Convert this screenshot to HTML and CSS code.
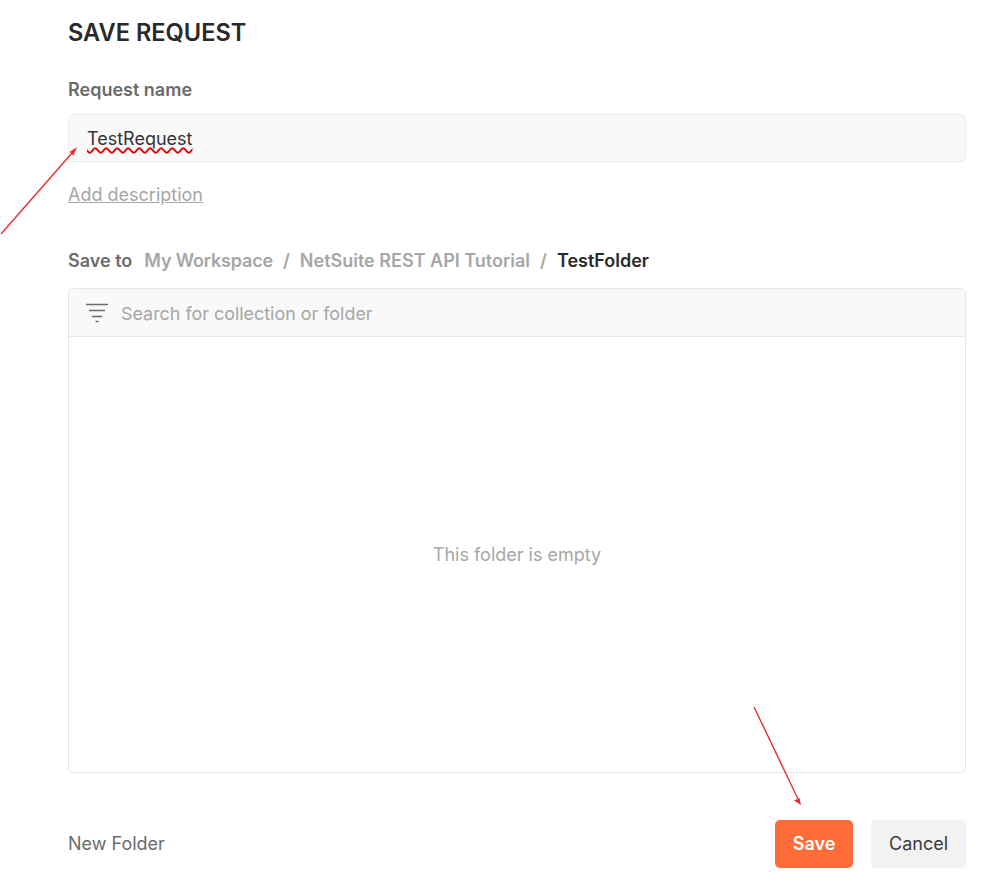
FILE: index.html
```html
<!DOCTYPE html>
<html lang="en">
<head>
<meta charset="utf-8">
<title>Save Request</title>
<link rel="stylesheet" href="styles.css">
</head>
<body>
<main class="dialog">
  <h1 class="title">SAVE REQUEST</h1>
  <label class="label">Request name</label>
  <div class="name-input"><span class="misspelt">TestRequest</span></div>
  <a class="add-desc">Add description</a>
  <div class="crumbs">
    <span class="crumb-label">Save to</span>
    <span class="crumb crumb-root">My Workspace</span>
    <span class="crumb">/</span>
    <span class="crumb">NetSuite REST API Tutorial</span>
    <span class="crumb">/</span>
    <span class="crumb-current">TestFolder</span>
  </div>
  <section class="browser">
    <div class="search">
      <svg class="filter" width="22" height="20" viewBox="0 0 22 20" aria-hidden="true">
        <path d="M0 1.500H22M3 7.500H19M6 13.500H16M9.500 18.500H12.500" fill="none" stroke="#6b6b6b" stroke-width="1.500"/>
      </svg>
      <span class="placeholder">Search for collection or folder</span>
    </div>
    <div class="empty">This folder is empty</div>
  </section>
  <footer class="actions">
    <span class="new-folder">New Folder</span>
    <div class="buttons">
      <button class="btn btn-save">Save</button>
      <button class="btn btn-cancel">Cancel</button>
    </div>
  </footer>
</main>
<svg class="annotations" width="993" height="892" viewBox="0 0 993 892" aria-hidden="true">
  <path d="M1 234L72 153" stroke="#e8302f" stroke-width="1.400" fill="none"/>
  <path d="M77 147L69.500 152L73.500 155.500Z" fill="#e8302f"/>
  <path d="M754 707L798 799" stroke="#e8302f" stroke-width="1.400" fill="none"/>
  <path d="M801 805L794 800.500L799.500 798Z" fill="#e8302f"/>
</svg>
</body>
</html>
```
FILE: styles.css
```css
* { box-sizing: border-box; }
html, body { margin: 0; background: #fff; }
body {
  width: 993px;
  height: 892px;
  overflow: hidden;
  position: relative;
  font-family: Inter, "Liberation Sans", sans-serif;
  font-size: 18px;
}
.dialog {
  width: 966px;
  padding: 17px 0 0 68px;
  display: flex;
  flex-direction: column;
}
.title {
  margin: 0;
  font-size: 23.600px;
  line-height: 32px;
  font-weight: 600;
  color: #2a2a2a;
}
.label {
  margin-top: 26px;
  font-size: 18px;
  line-height: 30px;
  font-weight: 600;
  color: #6b6b6b;
}
.name-input {
  margin-top: 9px;
  height: 48px;
  padding: 1px 18px 0;
  display: flex;
  align-items: center;
  background: #f9f9f9;
  border: 1px solid #ededed;
  border-radius: 5px;
  color: #333;
}
.misspelt {
  text-decoration: underline wavy #e60000 1.500px;
  text-underline-offset: 2px;
  text-decoration-skip-ink: none;
}
.add-desc {
  margin-top: 18px;
  align-self: flex-start;
  line-height: 30px;
  color: #a6a6a6;
  text-decoration: underline;
}
.crumbs {
  margin-top: 36px;
  display: flex;
  gap: 10px;
  line-height: 30px;
  font-weight: 600;
  color: #a6a6a6;
}
.crumb-label { color: #6b6b6b; margin-right: 2px; }
.crumb-root { letter-spacing: -0.170px; }
.crumb-current { color: #2a2a2a; }
.browser {
  margin-top: 12px;
  height: 485px;
  display: flex;
  flex-direction: column;
  border: 1px solid #e6e6e6;
  border-radius: 5px;
  overflow: hidden;
}
.search {
  height: 48px;
  padding: 0 17px;
  display: flex;
  align-items: center;
  gap: 13px;
  background: #f9f9f9;
  border-bottom: 1px solid #e6e6e6;
}
.filter { flex: none; }
.placeholder { color: #a6a6a6; font-size: 17.900px; padding-top: 2px; }
.empty {
  flex: 1;
  display: flex;
  align-items: center;
  justify-content: center;
  color: #a6a6a6;
}
.actions {
  margin-top: 47px;
  display: flex;
  align-items: center;
  justify-content: space-between;
}
.new-folder { color: #6b6b6b; padding-bottom: 2px; }
.buttons { display: flex; gap: 18px; }
.btn {
  height: 48px;
  border: 0;
  border-radius: 5px;
  padding: 0 0 2px;
  font-family: inherit;
  font-size: 18px;
}
.btn-save { width: 78px; background: #ff6c37; color: #fff; font-weight: 600; }
.btn-cancel { width: 95px; background: #f2f2f2; color: #3b3b3b; }
.annotations { position: absolute; left: 0; top: 0; pointer-events: none; }
```
